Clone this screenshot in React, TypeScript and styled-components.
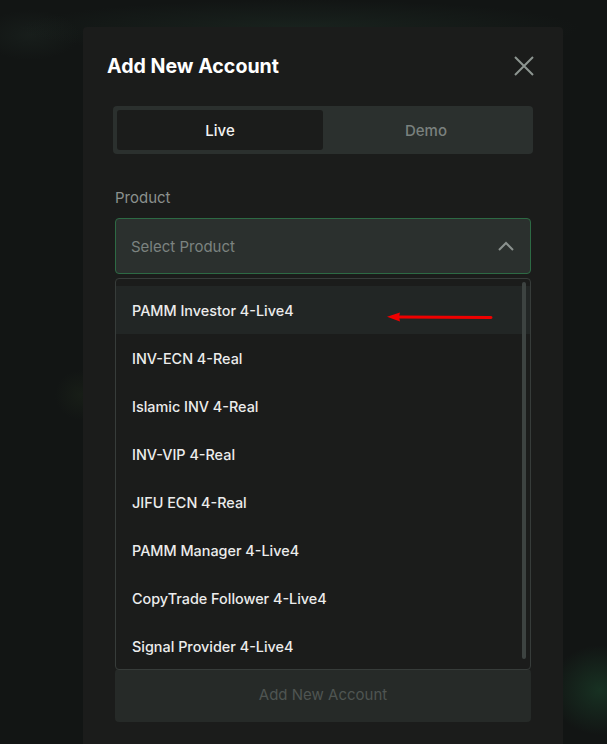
import React from 'react';
import styled, { createGlobalStyle } from 'styled-components';

const GlobalStyle = createGlobalStyle`
  html, body {
    margin: 0;
    padding: 0;
    background: #121514;
    font-family: Inter, "Noto Sans", sans-serif;
    overflow: hidden;
  }
`

const Backdrop = styled.div`
  width: 607px;
  height: 744px;
  display: flex;
  align-items: flex-start;
  padding: 27px 0 0 83px;
  box-sizing: border-box;
  background:
    radial-gradient(ellipse 280px 28px at 300px 28px, rgba(40, 65, 52, 0.3), transparent),
    radial-gradient(ellipse 50px 45px at 600px 690px, rgba(28, 72, 46, 0.55), transparent),
    radial-gradient(ellipse 25px 25px at 80px 395px, rgba(40, 55, 32, 0.25), transparent),
    radial-gradient(ellipse 50px 25px at 30px 35px, rgba(40, 55, 48, 0.25), transparent),
    #121514;
`

const Modal = styled.div`
  width: 480px;
  min-height: 740px;
  background: #1b1c1b;
  border-radius: 4px 4px 0 0;
  padding: 27px 30px 0 24px;
  box-sizing: border-box;
  display: flex;
  flex-direction: column;
`

const Header = styled.div`
  display: flex;
  justify-content: space-between;
  align-items: center;
  height: 24px;
`

const Title = styled.h2`
  margin: 0;
  color: #ffffff;
  font-size: 19.6px;
  font-weight: 700;
`

const CloseButton = styled.button`
  width: 20px;
  height: 20px;
  padding: 0;
  border: none;
  background: none;
  display: flex;
  margin-right: -1px;
`

const Tabs = styled.div`
  margin: 28px 0 0 6px;
  height: 48px;
  background: #2b302e;
  border-radius: 4px;
  padding: 4px;
  box-sizing: border-box;
  display: grid;
  grid-template-columns: 1fr 1fr;
`

const Tab = styled.div<{ $active?: boolean }>`
  display: flex;
  align-items: center;
  justify-content: center;
  border-radius: 3px;
  font-size: 15px;
  font-weight: 500;
  background: ${({ $active }) => ($active ? '#1b1c1b' : 'transparent')};
  color: ${({ $active }) => ($active ? '#f2f2f2' : '#7a817e')};
`

const Field = styled.div`
  margin: 34px 2px 0 8px;
  display: flex;
  flex-direction: column;
`

const Label = styled.div`
  color: #8b918e;
  font-size: 15px;
  line-height: 20px;
  margin-bottom: 10px;
`

const Select = styled.div`
  height: 56px;
  box-sizing: border-box;
  border: 1px solid #2d6a44;
  border-radius: 4px;
  background: #2b302e;
  display: flex;
  align-items: center;
  justify-content: space-between;
  padding: 0 16px 0 15px;
  color: #7c8380;
  font-size: 15px;
`

const Dropdown = styled.ul`
  position: relative;
  margin: 4px 0 0;
  padding: 7px 0 0;
  list-style: none;
  border: 1px solid #373c3a;
  border-radius: 4px;
  background: #1b1c1b;
  height: 392px;
  box-sizing: border-box;
  overflow: hidden;
`

const Option = styled.li<{ $highlight?: boolean }>`
  height: 48px;
  display: flex;
  align-items: center;
  padding-left: 16px;
  color: #ececec;
  font-size: 14.4px;
  font-weight: 500;
  background: ${({ $highlight }) => ($highlight ? '#222625' : 'transparent')};
`

const ScrollThumb = styled.div`
  position: absolute;
  top: 3px;
  right: 4px;
  width: 4px;
  height: 377px;
  border-radius: 2px;
  background: #3d4341;
`

const Arrow = styled.svg`
  position: absolute;
  left: 271px;
  top: 33px;
`

const SubmitButton = styled.button`
  height: 53px;
  margin-top: -1px;
  border: none;
  border-radius: 4px;
  background: #262a28;
  color: #4f5552;
  font-family: inherit;
  font-size: 15px;
  padding-bottom: 3px;
`

const products = [
  'PAMM Investor 4-Live4',
  'INV-ECN 4-Real',
  'Islamic INV 4-Real',
  'INV-VIP 4-Real',
  'JIFU ECN 4-Real',
  'PAMM Manager 4-Live4',
  'CopyTrade Follower 4-Live4',
  'Signal Provider 4-Live4',
]

const App = () => {
  return <>
    <GlobalStyle />
    <Backdrop>
      <Modal>
        <Header>
          <Title>Add New Account</Title>
          <CloseButton aria-label="close">
            <svg width="20" height="20" viewBox="0 0 20 20">
              <path d="M1 1 L19 19 M19 1 L1 19" stroke="#8d9591" strokeWidth="2" />
            </svg>
          </CloseButton>
        </Header>
        <Tabs>
          <Tab $active>Live</Tab>
          <Tab>Demo</Tab>
        </Tabs>
        <Field>
          <Label>Product</Label>
          <Select>
            <span>Select Product</span>
            <svg width="16" height="10" viewBox="0 0 16 10">
              <path d="M1 9 L8 2 L15 9" stroke="#8a918e" strokeWidth="2" fill="none" />
            </svg>
          </Select>
          <Dropdown>
            {products.map((p, i) => (
              <Option key={p} $highlight={i === 0}>{p}</Option>
            ))}
            <ScrollThumb />
            <Arrow width="106" height="10" viewBox="0 0 106 10">
              <path d="M12 5 L104 5.5" stroke="#f00000" strokeWidth="3" strokeLinecap="round" />
              <path d="M0 4.8 L13 0.5 L12 4.8 L13 9.5 Z" fill="#f00000" />
            </Arrow>
          </Dropdown>
          <SubmitButton>Add New Account</SubmitButton>
        </Field>
      </Modal>
    </Backdrop>
  </>
}

export default App;
